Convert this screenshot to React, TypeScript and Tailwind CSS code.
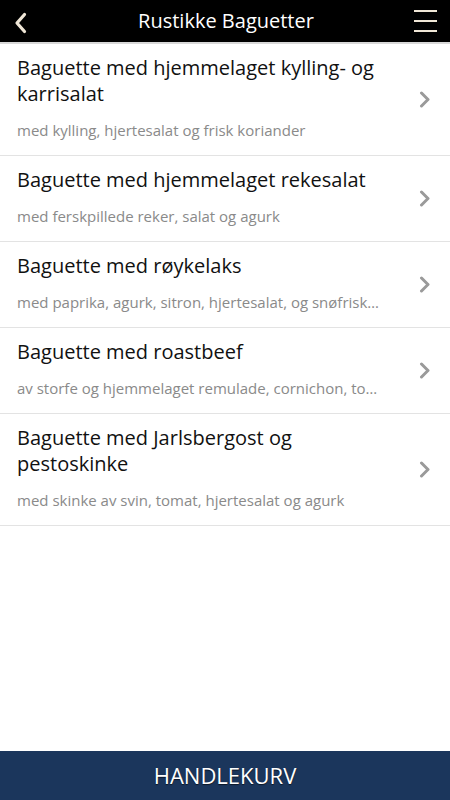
type Product = {
  title: string;
  description: string;
};

const products: Product[] = [
  { title: "Baguette med hjemmelaget kylling- og karrisalat", description: "med kylling, hjertesalat og frisk koriander" },
  { title: "Baguette med hjemmelaget rekesalat", description: "med ferskpillede reker, salat og agurk" },
  { title: "Baguette med røykelaks", description: "med paprika, agurk, sitron, hjertesalat, og snøfriskost" },
  { title: "Baguette med roastbeef", description: "av storfe og hjemmelaget remulade, cornichon, tomat og salat" },
  { title: "Baguette med Jarlsbergost og pestoskinke", description: "med skinke av svin, tomat, hjertesalat og agurk" },
];

function ProductRow({ product }: { product: Product }) {
  return (
    <div className="flex flex-row items-center border-b border-[#e3e3e3] pl-[17px] pr-[19px]">
      <div className="flex-1 min-w-0 pt-[11px] pb-[15px] pr-[35px]">
        <h3 className="text-[20px] leading-[26px] text-[#111111]">{product.title}</h3>
        <p className="mt-[13px] text-[15px] leading-[20px] text-[#8a8a8a] truncate">{product.description}</p>
      </div>
      <svg width="12" height="17" viewBox="0 0 12 17" className="shrink-0">
        <path d="M2.5 2 L9 8.5 L2.5 15" fill="none" stroke="#9a9a9a" strokeWidth="3" strokeLinecap="round" strokeLinejoin="round" />
      </svg>
    </div>
  );
}

export default function App() {
  return (
    <div className="w-[450px] h-[800px] flex flex-col bg-white font-['Open_Sans',sans-serif]">
      <header className="h-[44px] bg-black border-b-2 border-[#d8d8d8] flex flex-row items-center justify-between px-[12px]">
        <svg width="16" height="24" viewBox="0 0 16 24" className="ml-[1px] mt-[4px]">
          <path d="M11.5 3.5 L4 12 L11.5 20.5" fill="none" stroke="#efe6d6" strokeWidth="3.2" strokeLinecap="round" strokeLinejoin="round" />
        </svg>
        <h1 className="text-[20px] leading-[42px] text-white pl-[10px]">Rustikke Baguetter</h1>
        <svg width="26" height="24" viewBox="0 0 26 24" className="-mr-[1px]">
          <rect x="1" y="1" width="23" height="2" fill="#efe6d6" />
          <rect x="1" y="11" width="23" height="2" fill="#efe6d6" />
          <rect x="1" y="21" width="23" height="2" fill="#efe6d6" />
        </svg>
      </header>

      <div className="flex-1 overflow-hidden">
        {products.map((p) => (
          <ProductRow key={p.title} product={p} />
        ))}
      </div>

      <button
        type="button"
        className="h-[49px] bg-[#1b365c] text-white text-[22px] uppercase flex items-center justify-center [text-shadow:0_1px_1px_rgba(0,0,0,0.6)]"
      >Handlekurv</button>
    </div>
  );
}
